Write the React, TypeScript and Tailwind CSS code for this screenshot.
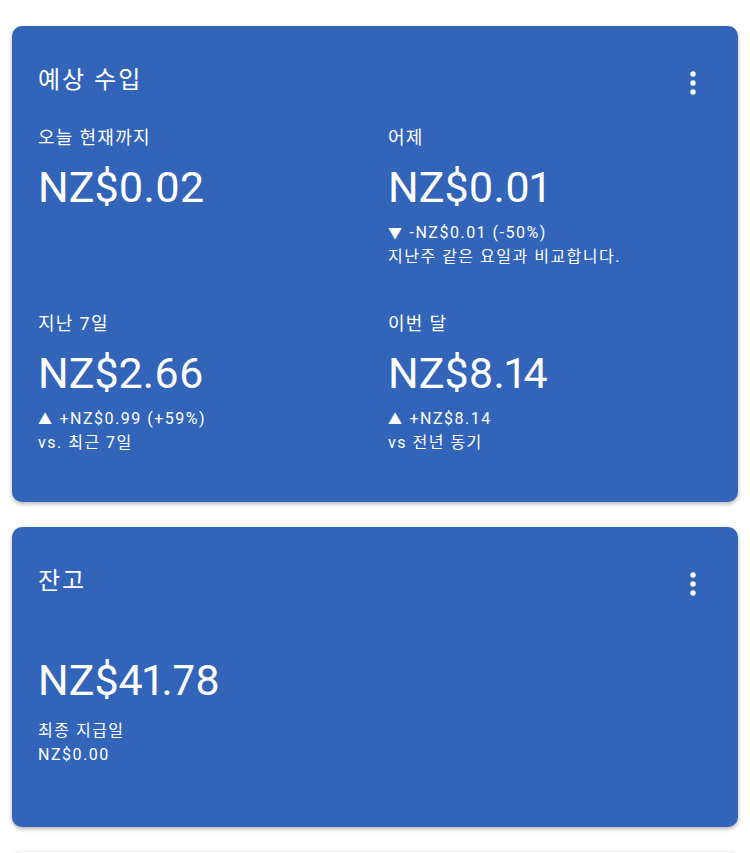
import React from 'react'

const font = { fontFamily: 'Roboto, "Noto Sans CJK KR", sans-serif' }

function MoreDots() {
  return (
    <svg width="6" height="24" viewBox="0 0 6 24" className="mt-[7px] mr-[16px] shrink-0" fill="white">
      <circle cx="3" cy="3" r="2.7" />
      <circle cx="3" cy="12" r="2.7" />
      <circle cx="3" cy="21" r="2.7" />
    </svg>
  )
}

interface Stat {
  label: string
  value: string
  arrow?: string
  change?: string
  note?: string
}

const stats: Stat[] = [
  { label: '오늘 현재까지', value: 'NZ$0.02' },
  { label: '어제', value: 'NZ$0.01', arrow: '▼', change: '-NZ$0.01 (-50%)', note: '지난주 같은 요일과 비교합니다.' },
  { label: '지난 7일', value: 'NZ$2.66', arrow: '▲', change: '+NZ$0.99 (+59%)', note: 'vs. 최근 7일' },
  { label: '이번 달', value: 'NZ$8.14', arrow: '▲', change: '+NZ$8.14', note: 'vs 전년 동기' },
]

function StatBlock({ stat }: { stat: Stat }) {
  return (
    <div>
      <div className="text-[18px] leading-[24px] tracking-[1.3px]">{stat.label}</div>
      <div className="mt-[11px] text-[43px] leading-[52px] proportional-nums">{stat.value}</div>
      {stat.change && (
        <div className="mt-[8px] text-[16px] leading-[24px] tracking-[1.5px]">
          <div>
            <span className="mr-[6px] text-[14px]">{stat.arrow}</span>
            {stat.change}
          </div>
          <div>{stat.note}</div>
        </div>
      )}
    </div>
  )
}

export default function App() {
  return (
    <div className="min-h-screen bg-white px-[12px] pt-[26px] text-white" style={font}>
      {/* 예상 수입 */}
      <div className="rounded-[10px] bg-[#3264b9] pl-[26px] pr-[26px] pt-[38px] pb-[47px] shadow-[0_2px_4px_rgba(0,0,0,0.3)]">
        <div className="flex items-start justify-between">
          <h2 className="text-[24px] leading-[32px] tracking-[2px]">예상 수입</h2>
          <MoreDots />
        </div>
        <div className="mt-[30px] grid grid-cols-2 gap-x-[26px] gap-y-[43px]">
          {stats.map((s) => (
            <StatBlock key={s.label} stat={s} />
          ))}
        </div>
      </div>

      {/* 잔고 */}
      <div className="mt-[25px] rounded-[10px] bg-[#3264b9] pl-[26px] pr-[26px] pt-[38px] pb-[60px] shadow-[0_2px_4px_rgba(0,0,0,0.3)]">
        <div className="flex items-start justify-between">
          <h2 className="text-[24px] leading-[32px] tracking-[2px]">잔고</h2>
          <MoreDots />
        </div>
        <div className="mt-[57px] text-[43px] leading-[52px] proportional-nums">NZ$41.78</div>
        <div className="mt-[13px] text-[16px] leading-[24px] tracking-[1.5px]">
          <div>최종 지급일</div>
          <div>NZ$0.00</div>
        </div>
      </div>

      <div className="mt-[25px] h-[120px] rounded-[10px] bg-white shadow-[0_1px_4px_rgba(0,0,0,0.2)]" />
    </div>
  )
}
